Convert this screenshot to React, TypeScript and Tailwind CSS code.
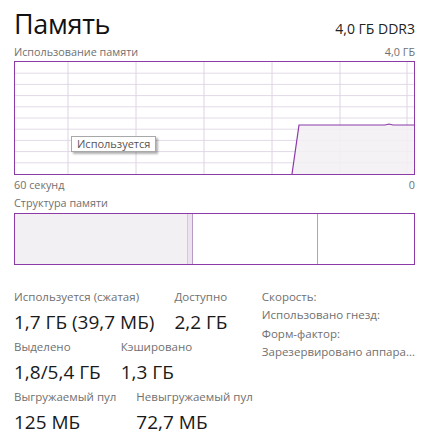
const hLines = [1, 2, 3, 4, 5, 6, 7, 8, 9];
const vLines = [53, 121, 189, 257, 325, 392];

function UsageChart() {
  return (
    <div className="relative w-[401px] h-[114px] border border-[#8b3aa8]">
      <svg width="399" height="112" className="block">
        {hLines.map((k) => (
          <line key={k} x1="0" x2="399" y1={k * 11.2} y2={k * 11.2} stroke="#e2dae7" strokeWidth="1" />
        ))}
        {vLines.map((x) => (
          <line key={x} x1={x} x2={x} y1="0" y2="112" stroke="#ddd4e2" strokeWidth="1" />
        ))}
        <polygon
          points="277,112 284,63 370,63 374,62 378,63 399,63 399,112"
          fill="#f3f0f4"
          fillOpacity="0.85"
        />
        <polyline
          points="277,112 284,63 370,63 374,62 378,63 399,63"
          fill="none"
          stroke="#8b3aa8"
          strokeWidth="1.2"
        />
      </svg>
      <div className="absolute left-[56px] top-[74px] h-[16px] px-[5px] flex items-center bg-white border border-[#a8a8a8] shadow-[2px_2px_2px_rgba(0,0,0,0.3)] text-[11px] text-[#555]">
        Используется
      </div>
    </div>
  );
}

function StructureBar() {
  return (
    <div className="flex w-[401px] h-[52px] border border-[#8b3aa8]">
      <div className="w-[172px] bg-[#f3f0f4]" />
      <div className="w-[5px] bg-[#ece2f0] border-l border-[#d6c6de]" />
      <div className="w-[125px] border-l border-[#b89cc6]" />
      <div className="flex-1 border-l border-[#b89cc6]" />
    </div>
  );
}

function Stat({ label, value }: { label: string; value: string }) {
  return (
    <div className="flex flex-col">
      <span className="text-[11.5px] leading-[16px] text-[#707070]">{label}</span>
      <span className="mt-[4px] text-[19px] leading-[26px] text-[#1a1a1a] whitespace-nowrap">{value}</span>
    </div>
  );
}

export default function App() {
  return (
    <div
      className="w-[429px] h-[439px] bg-white px-[14px] pt-[5px] overflow-hidden"
      style={{ fontFamily: '"Open Sans", "Noto Sans", sans-serif' }}
    >
      <div className="flex justify-between items-baseline">
        <h1 className="text-[27px] leading-[38px] text-[#111] tracking-[-0.3px]">Память</h1>
        <span className="text-[14px] text-[#222]">4,0 ГБ DDR3</span>
      </div>

      <div className="flex justify-between text-[10.8px] leading-[14px] text-[#707070] mt-[2px] mb-[2px]">
        <span>Использование памяти</span>
        <span>4,0 ГБ</span>
      </div>
      <UsageChart />
      <div className="flex justify-between text-[10.8px] leading-[14px] text-[#707070] mt-[3px]">
        <span>60 секунд</span>
        <span>0</span>
      </div>

      <div className="text-[10.8px] leading-[14px] text-[#707070] mt-[4px] mb-[3px]">Структура памяти</div>
      <StructureBar />

      <div className="flex mt-[24px]">
        <div className="w-[251px] flex flex-col gap-[4px]">
          <div className="flex gap-[20px]">
            <Stat label="Используется (сжатая)" value="1,7 ГБ (39,7 МБ)" />
            <Stat label="Доступно" value="2,2 ГБ" />
          </div>
          <div className="flex gap-[20px]">
            <Stat label="Выделено" value="1,8/5,4 ГБ" />
            <Stat label="Кэшировано" value="1,3 ГБ" />
          </div>
          <div className="flex gap-[20px]">
            <Stat label="Выгружаемый пул" value="125 МБ" />
            <Stat label="Невыгружаемый пул" value="72,7 МБ" />
          </div>
        </div>
        <div className="flex flex-col text-[11.5px] leading-[18.3px] text-[#707070] -mt-[1px]">
          <span>Скорость:</span>
          <span>Использовано гнезд:</span>
          <span>Форм-фактор:</span>
          <span className="whitespace-nowrap">Зарезервировано аппара...</span>
        </div>
      </div>
    </div>
  );
}
